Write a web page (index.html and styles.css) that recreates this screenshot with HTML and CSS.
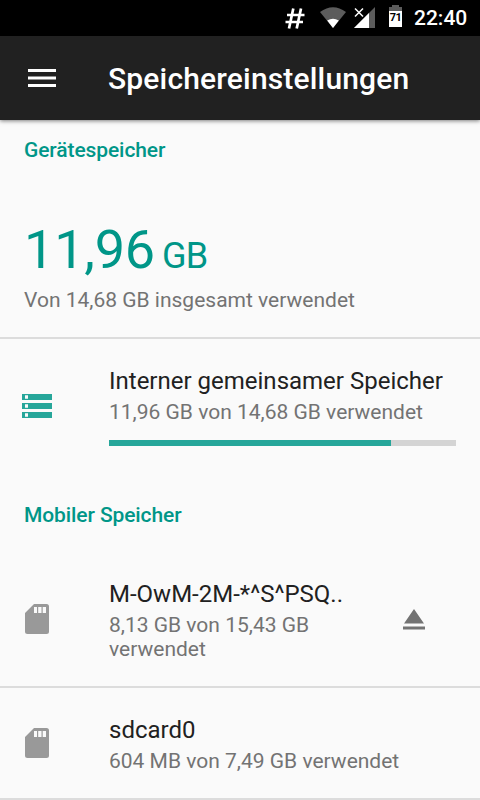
FILE: index.html
```html
<!DOCTYPE html>
<html lang="de">
<head>
<meta charset="utf-8">
<title>Speichereinstellungen</title>
<link rel="stylesheet" href="styles.css">
</head>
<body>
<div class="status">
  <svg class="hash" width="20" height="21" viewBox="0 0 20 21"><path d="M8.3 .5L4 20.5M16 .5L11.7 20.5M2 7H19.5M.5 14H18" stroke="#fff" stroke-width="2.7"/></svg>
  <svg class="wifi" width="26" height="21" viewBox="0 0 26 21"><path d="M0 5Q13-4.5 26 5L13 21Z" fill="#5c5c5c"/><path d="M7.2 13.5Q13 10 18.8 13.5L13 21Z" fill="#fff"/></svg>
  <svg class="signal" width="21" height="21" viewBox="0 0 21 21"><path d="M21 0V21H0Z" fill="#5c5c5c"/><path d="M15 6V21H0Z" fill="#fff"/><path d="M1 1.5L9 9.5M9 1.5L1 9.5" stroke="#fff" stroke-width="1.5"/></svg>
  <span class="battery"><span class="level">71</span></span>
  <span class="clock">22:40</span>
</div>
<header class="bar">
  <svg class="menu" width="28" height="20" viewBox="0 0 28 20"><path d="M0 2.5H28M0 10H28M0 17.5H28" stroke="#fff" stroke-width="3"/></svg>
  <h1>Speichereinstellungen</h1>
</header>
<main>
  <h2>Gerätespeicher</h2>
  <section class="summary">
    <div class="total"><span class="num">11,96</span> <span class="unit">GB</span></div>
    <p class="sub">Von 14,68 GB insgesamt verwendet</p>
  </section>
  <section class="row internal">
    <svg class="icon" width="30" height="24" viewBox="0 0 30 24"><path d="M0 0H30V6H0ZM0 9H30V15H0ZM0 18H30V24H0Z" fill="#26a69a"/><path d="M3 1.2H6V4.8H3ZM3 10.2H6V13.8H3ZM3 19.2H6V22.8H3Z" fill="#fafafa"/></svg>
    <div class="text"><div class="title">Interner gemeinsamer Speicher</div><p class="sub">11,96 GB von 14,68 GB verwendet</p><div class="track"><div class="fill"></div></div></div>
  </section>
  <h2 class="second">Mobiler Speicher</h2>
  <section class="row mobile">
    <svg class="icon card" width="24" height="30" viewBox="0 0 24 30"><path fill-rule="evenodd" d="M9 0H21.5Q24 0 24 2.5V27.5Q24 30 21.5 30H2.5Q0 30 0 27.5V9ZM9 3V9H12V3ZM13.2 3V9H16.5V3ZM17.7 3V9H21V3Z" fill="#999"/></svg>
    <div class="text"><div class="title">M-OwM-2M-*^S^PSQ..</div><p class="sub">8,13 GB von 15,43 GB verwendet</p></div>
    <svg class="eject" width="22" height="21" viewBox="0 0 22 21"><path d="M11 0L21 14.5H1ZM0 17.5H22V20.5H0Z" fill="#737373"/></svg>
  </section>
  <section class="row sd">
    <svg class="icon card" width="24" height="30" viewBox="0 0 24 30"><path fill-rule="evenodd" d="M9 0H21.5Q24 0 24 2.5V27.5Q24 30 21.5 30H2.5Q0 30 0 27.5V9ZM9 3V9H12V3ZM13.2 3V9H16.5V3ZM17.7 3V9H21V3Z" fill="#999"/></svg>
    <div class="text"><div class="title">sdcard0</div><p class="sub">604 MB von 7,49 GB verwendet</p></div>
  </section>
</main>
</body>
</html>
```
FILE: styles.css
```css
* { box-sizing: border-box; }
body { margin: 0; width: 480px; height: 800px; overflow: hidden; background: #fafafa; font-family: Roboto, sans-serif; color: #212121; }
h1, h2, p { margin: 0; font-weight: 500; }
svg { display: block; flex: none; }
.status { height: 36px; background: #000; color: #fff; display: flex; align-items: flex-start; padding-left: 285px; }
.hash { margin: 8px 15px 0 0; }
.wifi { margin: 7px 8px 0 0; }
.signal { margin: 7px 14px 0 0; }
.battery { width: 13px; height: 22px; margin: 5px 12px 0 0; background: linear-gradient(#fff, #fff) 0 6px / 13px 16px no-repeat, linear-gradient(#5c5c5c, #5c5c5c) 0 2px / 13px 4px no-repeat, linear-gradient(#5c5c5c, #5c5c5c) 3px 0 / 7px 2px no-repeat; }
.level { display: block; color: #000; font: 700 11px/25px Roboto, sans-serif; text-align: center; letter-spacing: -0.5px; }
.clock { font-size: 21px; line-height: 37px; font-weight: 500; }
.bar { height: 84px; background: #212121; color: #fff; display: flex; align-items: center; padding-left: 28px; gap: 52px; box-shadow: 0 1px 4px rgba(0,0,0,.5); }
.bar h1 { font-size: 30px; letter-spacing: 0.17px; }
h2 { color: #009688; font-size: 21px; line-height: 24px; padding: 18px 24px 0; letter-spacing: -0.1px; }
.summary { height: 177px; padding: 52px 24px 0; border-bottom: 2px solid #dcdcdc; }
.total { color: #009688; line-height: 72px; height: 74px; white-space: nowrap; }
.num { font-size: 54px; letter-spacing: -0.2px; }
.unit { font-size: 36px; margin-left: 3px; letter-spacing: -0.8px; }
.sub { color: #737373; font-size: 21px; line-height: 24px; font-weight: 400; }
.row { display: flex; align-items: center; }
.icon { margin-left: 22px; margin-right: 57px; }
.card { margin-left: 25px; margin-right: 60px; }
.title { font-size: 24px; line-height: 32px; height: 35px; white-space: nowrap; }
.internal { height: 134px; }
.internal .text { width: 347px; padding-bottom: 2px; }
.track { height: 6px; background: #d4d4d4; margin-top: 16px; }
.fill { height: 6px; width: 282px; background: #26a69a; }
.second { padding-top: 30px; }
.mobile { height: 161px; padding-top: 24px; border-bottom: 2px solid #dcdcdc; }
.mobile .text { width: 294px; padding-top: 2px; padding-right: 60px; }
.eject { margin-top: 2px; }
.sd { height: 112px; border-bottom: 2px solid #dcdcdc; }
```
